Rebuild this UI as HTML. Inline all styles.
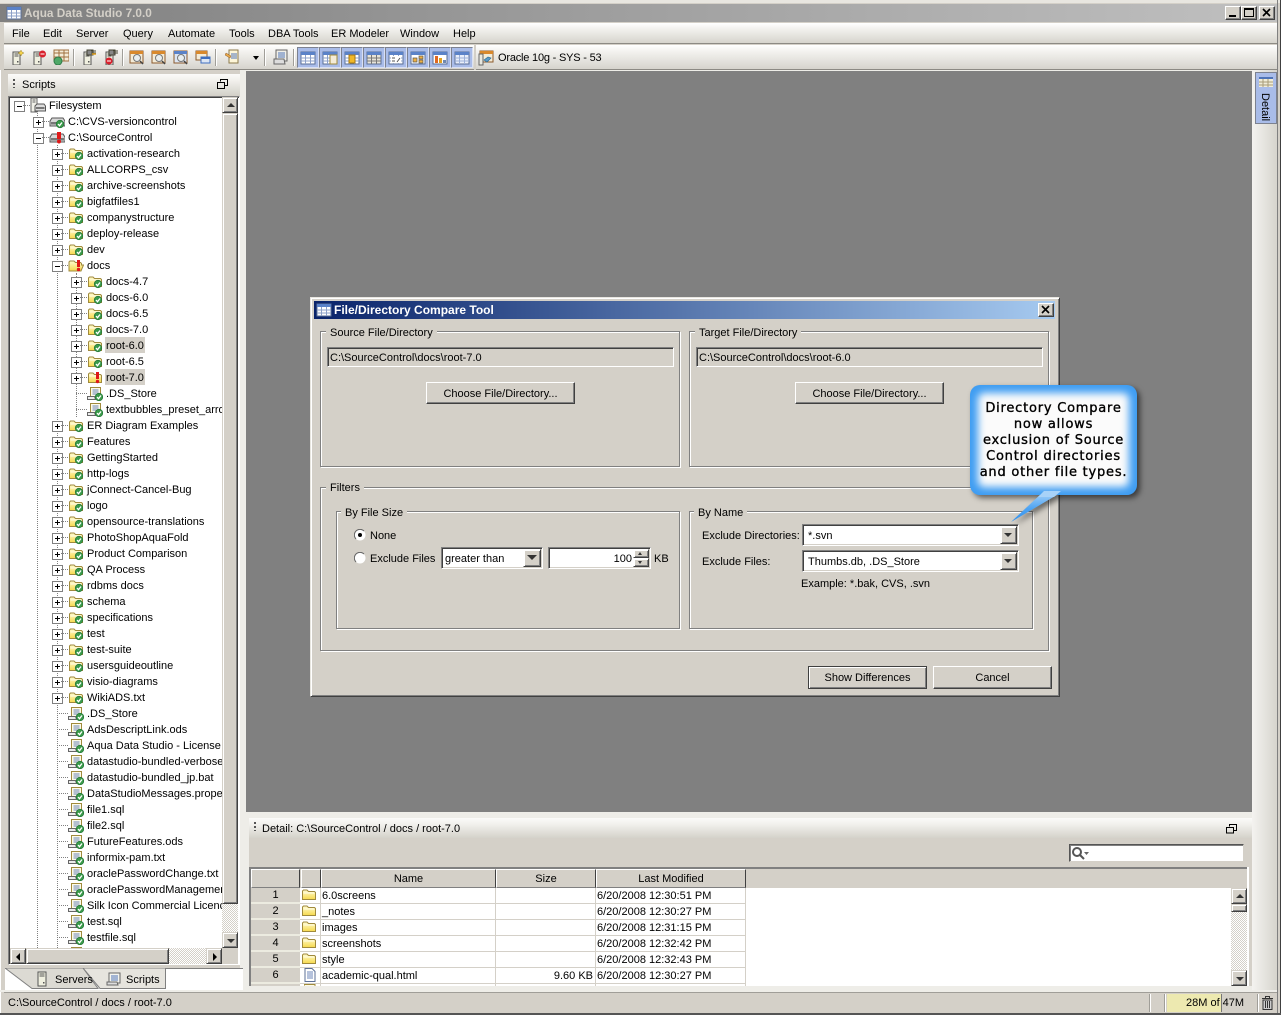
<!DOCTYPE html>
<html><head><meta charset="utf-8"><title>Aqua Data Studio 7.0.0</title>
<style>
html,body{margin:0;padding:0}
body{width:1281px;height:1015px;position:relative;overflow:hidden;background:#d4d0c8;font:11px/16px "Liberation Sans",sans-serif;color:#000}
div,span,svg{box-sizing:border-box}
.a,.t,.rw{position:absolute}
.t{white-space:nowrap;height:16px;line-height:18px}
.grad{background:linear-gradient(#fff,#f4f3f0 25%,#d6d4cd)}
.rw{height:16px;white-space:nowrap;line-height:16px}
.rw svg.ic{position:absolute;left:16px;top:0;width:16px;height:16px}
.rw span{position:absolute;left:35px;top:0;height:16px;line-height:18px;padding:0 1px;margin-left:-1px}
.rw span.h{background:#d4d0c8}
.rw b{position:absolute;left:0;top:4px;width:9px;height:9px;border:1px solid #808080;background:linear-gradient(#000,#000) center/5px 1px no-repeat,linear-gradient(#000,#000) center/1px 5px no-repeat,#fff}
.rw.m b{background:linear-gradient(#000,#000) center/5px 1px no-repeat,#fff}
.rw i{position:absolute;left:9px;top:8px;width:7px;border-top:1px dotted #808080}
.rw.n i{left:5px;width:11px}
.l0{left:14px}.l1{left:33px}.l2{left:52px}.l3{left:71px}
.vd{position:absolute;width:1px;border-left:1px dotted #808080}
.btn{position:absolute;background:#d4d0c8;border:1px solid;border-color:#fff #404040 #404040 #fff;box-shadow:inset -1px -1px 0 #808080;text-align:center}
.sb{position:absolute;background:#d4d0c8;border:1px solid;border-color:#d4d0c8 #404040 #404040 #d4d0c8;box-shadow:inset 1px 1px 0 #fff,inset -1px -1px 0 #808080}
.pat{position:absolute;background:repeating-conic-gradient(#d4d0c8 0 25%,#fff 0 50%) 0 0/2px 2px}
.up,.dn,.lf,.rt{position:absolute;width:0;height:0;border-style:solid;border-color:transparent}
.up{left:4px;top:5px;border-width:0 4px 4px;border-bottom-color:#333}
.dn{left:4px;top:6px;border-width:4px 4px 0;border-top-color:#333}
.lf{left:5px;top:4px;border-width:4px 4px 4px 0;border-right-color:#000}
.rt{left:6px;top:4px;border-width:4px 0 4px 4px;border-left-color:#000}
.grp{position:absolute;border:1px solid #808080;box-shadow:1px 1px 0 #fff,inset 1px 1px 0 #fff}
.lg{position:absolute;background:#d4d0c8;padding:0 4px;height:14px;line-height:16px;top:-7px;white-space:nowrap}
.fld{position:absolute;border:1px solid;border-color:#808080 #fff #fff #808080;box-shadow:inset 1px 1px 0 #404040,inset -1px -1px 0 #d4d0c8}
.tb{position:absolute;top:47px;width:22px;height:21px;background:#a9bce9;border:1px solid;border-color:#7d8290 #d9e0f4 #d9e0f4 #7d8290}
.tb svg{position:absolute;left:2px;top:2px}
.tsp{position:absolute;top:49px;width:2px;height:17px;border-left:1px solid #a09e98;border-right:1px solid #fff}
.hd{position:absolute;top:869px;height:19px;background:#d4d0c8;border:1px solid;border-color:#fff #404040 #808080 #fff;text-align:center;line-height:18px}
.cell{position:absolute;height:16px;line-height:17px;white-space:nowrap;border-bottom:1px solid #d4d0c8;border-right:1px solid #d4d0c8;background:#fff;overflow:hidden}
.rn{position:absolute;left:251px;width:49px;height:16px;line-height:15px;text-align:center;background:#d4d0c8;border-bottom:2px solid #ecebe0}
.tool{position:absolute;width:16px;height:16px;top:49px}
.fi{position:absolute;left:1px;top:-2px}
</style></head><body>
<svg width="0" height="0" style="position:absolute">
<defs>
<linearGradient id="yg" x1="0" y1="0" x2="0" y2="1"><stop offset="0" stop-color="#fffbd0"/><stop offset="1" stop-color="#f6d94c"/></linearGradient>
<symbol id="ck" viewBox="0 0 16 16"><circle cx="11" cy="11" r="3.800" fill="#3a9a4a" stroke="#1f6f33" stroke-width=".6"/><path d="M9 11l1.500 1.700 2.500-3.200" fill="none" stroke="#fff" stroke-width="1.300"/></symbol>
<symbol id="bg" viewBox="0 0 16 16"><path d="M9 3h3v7H9z" fill="#e01818"/><circle cx="10.500" cy="12.500" r="1.700" fill="#e01818"/></symbol>
<symbol id="f" viewBox="0 0 16 16"><path d="M1.500 13.500V5l1-1h3.500l1.500 1.500h6l1 1v7z" fill="url(#yg)" stroke="#a08a3c"/><path d="M2.500 7h11" stroke="#fffde8"/></symbol>
<symbol id="fc" viewBox="0 0 16 16"><use href="#f"/><use href="#ck"/></symbol>
<symbol id="fr" viewBox="0 0 16 16"><use href="#f"/><use href="#bg"/></symbol>
<symbol id="fo" viewBox="0 0 16 16"><path d="M1 14V5l1-1h4l1.500 1.500h5l1 1V8h2l-2.500 6z" fill="url(#yg)" stroke="#a08a3c"/><use href="#bg"/></symbol>
<symbol id="dc" viewBox="0 0 16 16"><path d="M1 8l2-3h11l2 3v5H1z" fill="#d8d8d8" stroke="#555"/><path d="M2 9h13v2.500H2z" fill="#777"/><use href="#ck"/></symbol>
<symbol id="dr" viewBox="0 0 16 16"><path d="M1 8l2-3h11l2 3v5H1z" fill="#d8d8d8" stroke="#555"/><path d="M2 9h13v2.500H2z" fill="#777"/><path d="M8 3h4v7H8z" fill="#e01818"/><circle cx="10" cy="12.500" r="2" fill="#e01818"/></symbol>
<symbol id="fs" viewBox="0 0 16 16"><path d="M1 1h6v14H1z" fill="#f0f0e8" stroke="#666"/><path d="M2.500 3h3M2.500 5h3" stroke="#666"/><path d="M5 9l2-2h7l1.500 2v5H5z" fill="#ddd" stroke="#555"/><path d="M6 10h8.500v2H6z" fill="#777"/></symbol>
<symbol id="fl" viewBox="0 0 16 16"><path d="M3.500 2.500h10v11h-10z" fill="#fdfbe8" stroke="#a08a3c"/><path d="M5.500 5h6M5.500 7h6M5.500 9h4" stroke="#6b84b8"/><path d="M.5 11.500h7l1 3h-8z" fill="#ececec" stroke="#666"/><use href="#ck" x="1" y="1"/></symbol>
<symbol id="doc" viewBox="0 0 16 16"><path d="M3 1.500h7l3 3v10H3z" fill="#fff" stroke="#5b6f96"/><path d="M5 5h6M5 7h6M5 9h6M5 11h6" stroke="#6b84b8"/></symbol>
<symbol id="grid" viewBox="0 0 16 16"><path d="M1 2h14v12H1z" fill="#f0ecd8" stroke="#8c7a4c"/><path d="M1 2h14v3H1z" fill="#3f6fc0"/><path d="M1 8h14M1 11h14M5.500 5v9M10.500 5v9" stroke="#a89c78"/></symbol>
<symbol id="srv" viewBox="0 0 16 16"><path d="M3 3h7v13H3z" fill="#f0f0e0" stroke="#555"/><path d="M4.500 5h4M4.500 7h4" stroke="#555"/><rect x="7" y="12" width="1.500" height="1.500" fill="#555"/></symbol>
<symbol id="qry" viewBox="0 0 16 16"><path d="M1 2h13v12H1z" fill="#f4ecd8" stroke="#8c5a2c"/><path d="M1 2h13v3H1z" fill="#d9892c"/><circle cx="8" cy="9" r="3.500" fill="#e8eef0" stroke="#777"/><path d="M11 12l3 3" stroke="#444" stroke-width="1.500"/></symbol>
<symbol id="btnic" viewBox="0 0 16 16"><path d="M1 2h14v12H1z" fill="#fff" stroke="#5b6f96"/><path d="M1 2h14v3H1z" fill="#5a82c8"/><path d="M1 8h14M1 11h14M5.500 5v9M10.500 5v9" stroke="#8ca0c8"/></symbol>
</defs></svg>

<!-- window frame -->
<div class="a" style="left:0;top:0;width:1281px;height:3px;background:#e8e6e0"></div>
<div class="a" style="left:0;top:4px;width:1278px;height:18px;background:linear-gradient(90deg,#808080,#c0c0c0)"></div>
<svg class="a" style="left:6px;top:5px" width="16" height="16"><use href="#btnic"/></svg>
<div class="t" style="left:24px;top:4px;color:#d4d0c8;font-weight:bold;font-size:11.800px">Aqua Data Studio 7.0.0</div>
<div class="btn" style="left:1225px;top:6px;width:16px;height:14px;"><div class="a" style="left:3px;top:8px;width:7px;height:2px;background:#000"></div></div>
<div class="btn" style="left:1241px;top:6px;width:16px;height:14px;"><div class="a" style="left:2px;top:1px;width:10px;height:9px;border:1px solid #000;border-top-width:2px"></div></div>
<div class="btn" style="left:1259px;top:6px;width:16px;height:14px;"><svg class="a" style="left:2px;top:1px" width="10" height="10"><path d="M1 1l7 7M8 1l-7 7" stroke="#000" stroke-width="1.600"/></svg></div>
<div class="a" style="left:1277px;top:0;width:1px;height:1015px;background:#808080"></div>
<div class="a" style="left:1280px;top:0;width:1px;height:1015px;background:#404040"></div>

<!-- menu -->
<div class="a grad" style="left:4px;top:23px;width:1273px;height:21px;border-bottom:1px solid #8c8a84"></div>
<div class="t" style="left:12px;top:25px">File</div>
<div class="t" style="left:43px;top:25px">Edit</div>
<div class="t" style="left:76px;top:25px">Server</div>
<div class="t" style="left:123px;top:25px">Query</div>
<div class="t" style="left:168px;top:25px">Automate</div>
<div class="t" style="left:229px;top:25px">Tools</div>
<div class="t" style="left:268px;top:25px">DBA Tools</div>
<div class="t" style="left:331px;top:25px">ER Modeler</div>
<div class="t" style="left:400px;top:25px">Window</div>
<div class="t" style="left:453px;top:25px">Help</div>

<!-- toolbar -->
<div class="a grad" style="left:4px;top:45px;width:1273px;height:25px;border-bottom:1px solid #8c8a84"></div>
<div class="a" style="left:474px;top:45px;width:2px;height:25px;background:#d4d0c8"></div>
<svg class="tool" style="left:10px"><use href="#srv"/><path d="M11 1l1 2 2 1-2 1-1 2-1-2-2-1 2-1z" fill="#f5d24a" stroke="#a08a3c" stroke-width=".5"/></svg>
<svg class="tool" style="left:31px"><use href="#srv"/><circle cx="11.500" cy="5" r="3.500" fill="#d8202c"/><path d="M9.500 5h4" stroke="#fff"/></svg>
<svg class="tool" style="left:53px"><path d="M1 1h15v11H1z" fill="#f4ecd8" stroke="#a07040"/><path d="M1 4h15M1 8h15M6 1v11M11 1v11" stroke="#a07040"/><circle cx="5" cy="12" r="4" fill="#4fa868" stroke="#2f7a48"/></svg>
<div class="tsp" style="left:73px"></div>
<svg class="tool" style="left:81px"><use href="#srv"/><path d="M6 1l6 0v5h-6zM10 2h5M10 4h5" fill="#888" stroke="#443"/><path d="M11 5h4" stroke="#e0a020" stroke-width="1.500"/></svg>
<svg class="tool" style="left:103px"><use href="#srv"/><path d="M6 1l6 0v5h-6zM10 2h5M10 4h5" fill="#888" stroke="#443"/><circle cx="6" cy="12" r="3.500" fill="#d8202c"/><path d="M4 12h4" stroke="#fff"/></svg>
<div class="tsp" style="left:122px"></div>
<svg class="tool" style="left:129px"><use href="#qry"/></svg>
<svg class="tool" style="left:151px"><use href="#qry"/></svg>
<svg class="tool" style="left:173px"><path d="M1 2h13v12H1z" fill="#dce6f4" stroke="#8c5a2c"/><path d="M1 2h13v3H1z" fill="#5a82c8"/><circle cx="8" cy="9" r="3.500" fill="#e8eef0" stroke="#777"/><path d="M11 12l3 3" stroke="#444" stroke-width="1.500"/></svg>
<svg class="tool" style="left:195px"><path d="M1 2h11v9H1z" fill="#f4ecd8" stroke="#8c5a2c"/><path d="M1 2h11v3H1z" fill="#d9892c"/><path d="M6 8h9v6H6z" fill="#dce6f4" stroke="#3f6fc0"/><path d="M6 8h9v2H6z" fill="#3f6fc0"/></svg>
<div class="tsp" style="left:215px"></div>
<svg class="tool" style="left:225px"><path d="M4 1h9v13H4z" fill="#fdf6d8" stroke="#8c7a4c"/><path d="M6 5h6M6 7h6M6 9h6" stroke="#4f74b8"/><path d="M1 4l5 3-1 2-5-3z" fill="#e8a848" stroke="#8c5a2c" stroke-width=".5"/></svg>
<div class="a" style="left:253px;top:56px;border-style:solid;border-width:4px 3.500px 0;border-color:#000 transparent transparent;width:0;height:0"></div>
<div class="tsp" style="left:264px"></div>
<svg class="tool" style="left:273px"><path d="M3 1h11v11H3z" fill="#f0efe8" stroke="#666"/><path d="M5 4h7M5 6h7M5 8h7" stroke="#4f74b8"/><path d="M1 10h10l1 5H1z" fill="#ddd" stroke="#666"/></svg>
<div class="tsp" style="left:293px"></div>
<div class="tb" style="left:297px"><svg width="16" height="16"><use href="#btnic"/></svg></div>
<div class="tb" style="left:319px"><svg width="16" height="16"><use href="#btnic"/><path d="M8 5h7v9H8z" fill="#f4ecd8" stroke="#a08a3c"/></svg></div>
<div class="tb" style="left:341px"><svg width="16" height="16"><use href="#btnic"/><path d="M5 5h6v8H5z" fill="#f0b828" stroke="#a87810"/></svg></div>
<div class="tb" style="left:363px"><svg width="16" height="16"><path d="M1 2h14v12H1z" fill="#e8e4d8" stroke="#5b6f96"/><path d="M1 2h14v3H1z" fill="#5a82c8"/><path d="M1 8h14M1 11h14M5.500 5v9M10.500 5v9" stroke="#777"/></svg></div>
<div class="tb" style="left:385px"><svg width="16" height="16"><use href="#btnic"/><path d="M3 6h10v7H3z" fill="#fff"/><path d="M4 8h3M4 11h3M9 12l3-4" stroke="#555"/></svg></div>
<div class="tb" style="left:407px"><svg width="16" height="16"><path d="M1 2h14v12H1z" fill="#fff" stroke="#5b6f96"/><path d="M1 2h14v3H1z" fill="#5a82c8"/><path d="M3 8h4v4H3zM9 6h4v3H9zM9 10h4v3H9z" fill="#f0b040" stroke="#555" stroke-width=".7"/></svg></div>
<div class="tb" style="left:429px"><svg width="16" height="16"><path d="M1 2h14v12H1z" fill="#fff" stroke="#5b6f96"/><path d="M1 2h14v3H1z" fill="#5a82c8"/><path d="M3 6h3v7H3z" fill="#e06820"/><path d="M7 8h3v5H7z" fill="#e0a020"/><path d="M11 10h3v3h-3z" fill="#7088b0"/></svg></div>
<div class="tb" style="left:451px"><svg width="16" height="16"><path d="M1 2h14v12H1z" fill="#e8eefa" stroke="#5b6f96"/><path d="M1 2h14v3H1z" fill="#5a82c8"/><path d="M1 8h14M1 11h14M5.500 5v9M10.500 5v9" stroke="#9cb0d8"/></svg></div>
<svg class="tool" style="left:478px;top:50px"><path d="M2 1h13v11H2z" fill="#f4ecd8" stroke="#8c5a2c"/><path d="M2 1h13v3H2z" fill="#d9892c"/><path d="M1 4h4v11H1z" fill="#e8e8e0" stroke="#666"/><path d="M6 10l4-3 3 1-4 4z" fill="#5a9ac8" stroke="#2f6f98" stroke-width=".7"/></svg>
<div class="t" style="left:498px;top:49px;letter-spacing:-.2px">Oracle 10g - SYS - 53</div>

<!-- main gray area -->
<div class="a" style="left:240px;top:70px;width:1037px;height:922px;background:#eeede8"></div>
<div class="a" style="left:246px;top:71px;width:1006px;height:741px;background:#808080"></div>

<!-- right strip -->
<div class="a" style="left:1252px;top:70px;width:25px;height:922px;background:linear-gradient(90deg,#f4f3f0,#d6d4cd)"></div>
<div class="a" style="left:1255px;top:72px;width:22px;height:52px;background:#a9bce9;border:1px solid #7d8290"></div>
<svg class="a" style="left:1259px;top:77px" width="14" height="11"><path d="M0 0h14v10H0z" fill="#f0ecd8"/><path d="M0 0h14v2H0z" fill="#4f74b8"/><path d="M0 5h14M0 8h14M4 2v8M9 2v8" stroke="#a89c78"/></svg>
<div class="a" style="left:1257px;top:93px;width:16px;height:28px;writing-mode:vertical-rl;line-height:16px;white-space:nowrap">Detail</div>

<!-- left panel -->
<div class="a" style="left:0;top:70px;width:240px;height:922px;background:#d4d0c8"></div>
<div class="a" style="left:0;top:70px;width:4px;height:945px;background:#d4d0c8;border-left:1px solid #fff"></div>
<div class="a" style="left:8px;top:74px;width:232px;height:21px;background:linear-gradient(#fbfbf9,#f2f1ed 30%,#d4d2ca)"></div>
<div class="a" style="left:13px;top:79px;width:2px;height:9px;background:repeating-linear-gradient(#555 0 2px,transparent 2px 4px)"></div>
<div class="t" style="left:22px;top:76px">Scripts</div>
<svg class="a" style="left:217px;top:79px" width="11" height="11"><path d="M3.500 2.500V.5h7v6H8" fill="none" stroke="#000"/><path d="M.5 3.500h7v6h-7z" fill="none" stroke="#000" stroke-width="1"/></svg>

<div class="a" style="left:8px;top:96px;width:232px;height:869px;background:#fff;border:1px solid #808080;border-right-color:#fff;border-bottom-color:#fff;box-shadow:inset 1px 1px 0 #404040"></div>
<div class="a" id="tree" style="left:0;top:0;width:222px;height:948px;overflow:hidden">
<div class="vd" style="left:37px;top:111px;height:837px"></div>
<div class="vd" style="left:57px;top:145px;height:803px"></div>
<div class="vd" style="left:76px;top:273px;height:144px"></div>
<div class="rw l0 m" style="top:97px"><b></b><i></i><svg class="ic"><use href="#fs"/></svg><span>Filesystem</span></div>
<div class="rw l1" style="top:113px"><b></b><i></i><svg class="ic"><use href="#dc"/></svg><span>C:\CVS-versioncontrol</span></div>
<div class="rw l1 m" style="top:129px"><b></b><i></i><svg class="ic"><use href="#dr"/></svg><span>C:\SourceControl</span></div>
<div class="rw l2" style="top:145px"><b></b><i></i><svg class="ic"><use href="#fc"/></svg><span>activation-research</span></div>
<div class="rw l2" style="top:161px"><b></b><i></i><svg class="ic"><use href="#fc"/></svg><span>ALLCORPS_csv</span></div>
<div class="rw l2" style="top:177px"><b></b><i></i><svg class="ic"><use href="#fc"/></svg><span>archive-screenshots</span></div>
<div class="rw l2" style="top:193px"><b></b><i></i><svg class="ic"><use href="#fc"/></svg><span>bigfatfiles1</span></div>
<div class="rw l2" style="top:209px"><b></b><i></i><svg class="ic"><use href="#fc"/></svg><span>companystructure</span></div>
<div class="rw l2" style="top:225px"><b></b><i></i><svg class="ic"><use href="#fc"/></svg><span>deploy-release</span></div>
<div class="rw l2" style="top:241px"><b></b><i></i><svg class="ic"><use href="#fc"/></svg><span>dev</span></div>
<div class="rw l2 m" style="top:257px"><b></b><i></i><svg class="ic"><use href="#fo"/></svg><span>docs</span></div>
<div class="rw l3" style="top:273px"><b></b><i></i><svg class="ic"><use href="#fc"/></svg><span>docs-4.7</span></div>
<div class="rw l3" style="top:289px"><b></b><i></i><svg class="ic"><use href="#fc"/></svg><span>docs-6.0</span></div>
<div class="rw l3" style="top:305px"><b></b><i></i><svg class="ic"><use href="#fc"/></svg><span>docs-6.5</span></div>
<div class="rw l3" style="top:321px"><b></b><i></i><svg class="ic"><use href="#fc"/></svg><span>docs-7.0</span></div>
<div class="rw l3" style="top:337px"><b></b><i></i><svg class="ic"><use href="#fc"/></svg><span class="h">root-6.0</span></div>
<div class="rw l3" style="top:353px"><b></b><i></i><svg class="ic"><use href="#fc"/></svg><span>root-6.5</span></div>
<div class="rw l3" style="top:369px"><b></b><i></i><svg class="ic"><use href="#fr"/></svg><span class="h">root-7.0</span></div>
<div class="rw l3 n" style="top:385px"><i></i><svg class="ic"><use href="#fl"/></svg><span>.DS_Store</span></div>
<div class="rw l3 n" style="top:401px"><i></i><svg class="ic"><use href="#fl"/></svg><span>textbubbles_preset_arrows</span></div>
<div class="rw l2" style="top:417px"><b></b><i></i><svg class="ic"><use href="#fc"/></svg><span>ER Diagram Examples</span></div>
<div class="rw l2" style="top:433px"><b></b><i></i><svg class="ic"><use href="#fc"/></svg><span>Features</span></div>
<div class="rw l2" style="top:449px"><b></b><i></i><svg class="ic"><use href="#fc"/></svg><span>GettingStarted</span></div>
<div class="rw l2" style="top:465px"><b></b><i></i><svg class="ic"><use href="#fc"/></svg><span>http-logs</span></div>
<div class="rw l2" style="top:481px"><b></b><i></i><svg class="ic"><use href="#fc"/></svg><span>jConnect-Cancel-Bug</span></div>
<div class="rw l2" style="top:497px"><b></b><i></i><svg class="ic"><use href="#fc"/></svg><span>logo</span></div>
<div class="rw l2" style="top:513px"><b></b><i></i><svg class="ic"><use href="#fc"/></svg><span>opensource-translations</span></div>
<div class="rw l2" style="top:529px"><b></b><i></i><svg class="ic"><use href="#fc"/></svg><span>PhotoShopAquaFold</span></div>
<div class="rw l2" style="top:545px"><b></b><i></i><svg class="ic"><use href="#fc"/></svg><span>Product Comparison</span></div>
<div class="rw l2" style="top:561px"><b></b><i></i><svg class="ic"><use href="#fc"/></svg><span>QA Process</span></div>
<div class="rw l2" style="top:577px"><b></b><i></i><svg class="ic"><use href="#fc"/></svg><span>rdbms docs</span></div>
<div class="rw l2" style="top:593px"><b></b><i></i><svg class="ic"><use href="#fc"/></svg><span>schema</span></div>
<div class="rw l2" style="top:609px"><b></b><i></i><svg class="ic"><use href="#fc"/></svg><span>specifications</span></div>
<div class="rw l2" style="top:625px"><b></b><i></i><svg class="ic"><use href="#fc"/></svg><span>test</span></div>
<div class="rw l2" style="top:641px"><b></b><i></i><svg class="ic"><use href="#fc"/></svg><span>test-suite</span></div>
<div class="rw l2" style="top:657px"><b></b><i></i><svg class="ic"><use href="#fc"/></svg><span>usersguideoutline</span></div>
<div class="rw l2" style="top:673px"><b></b><i></i><svg class="ic"><use href="#fc"/></svg><span>visio-diagrams</span></div>
<div class="rw l2" style="top:689px"><b></b><i></i><svg class="ic"><use href="#fc"/></svg><span>WikiADS.txt</span></div>
<div class="rw l2 n" style="top:705px"><i></i><svg class="ic"><use href="#fl"/></svg><span>.DS_Store</span></div>
<div class="rw l2 n" style="top:721px"><i></i><svg class="ic"><use href="#fl"/></svg><span>AdsDescriptLink.ods</span></div>
<div class="rw l2 n" style="top:737px"><i></i><svg class="ic"><use href="#fl"/></svg><span>Aqua Data Studio - License key</span></div>
<div class="rw l2 n" style="top:753px"><i></i><svg class="ic"><use href="#fl"/></svg><span>datastudio-bundled-verbose.bat</span></div>
<div class="rw l2 n" style="top:769px"><i></i><svg class="ic"><use href="#fl"/></svg><span>datastudio-bundled_jp.bat</span></div>
<div class="rw l2 n" style="top:785px"><i></i><svg class="ic"><use href="#fl"/></svg><span>DataStudioMessages.properties</span></div>
<div class="rw l2 n" style="top:801px"><i></i><svg class="ic"><use href="#fl"/></svg><span>file1.sql</span></div>
<div class="rw l2 n" style="top:817px"><i></i><svg class="ic"><use href="#fl"/></svg><span>file2.sql</span></div>
<div class="rw l2 n" style="top:833px"><i></i><svg class="ic"><use href="#fl"/></svg><span>FutureFeatures.ods</span></div>
<div class="rw l2 n" style="top:849px"><i></i><svg class="ic"><use href="#fl"/></svg><span>informix-pam.txt</span></div>
<div class="rw l2 n" style="top:865px"><i></i><svg class="ic"><use href="#fl"/></svg><span>oraclePasswordChange.txt</span></div>
<div class="rw l2 n" style="top:881px"><i></i><svg class="ic"><use href="#fl"/></svg><span>oraclePasswordManagement.txt</span></div>
<div class="rw l2 n" style="top:897px"><i></i><svg class="ic"><use href="#fl"/></svg><span>Silk Icon Commercial Licence.txt</span></div>
<div class="rw l2 n" style="top:913px"><i></i><svg class="ic"><use href="#fl"/></svg><span>test.sql</span></div>
<div class="rw l2 n" style="top:929px"><i></i><svg class="ic"><use href="#fl"/></svg><span>testfile.sql</span></div>
<div class="rw l2 n" style="top:945px"><i></i><svg class="ic"><use href="#fl"/></svg></div>
</div>
<!-- tree scrollbars -->
<div class="pat" style="left:222px;top:97px;width:16px;height:851px"></div>
<div class="sb" style="left:222px;top:97px;width:16px;height:16px"><div class="up"></div></div>
<div class="sb" style="left:222px;top:113px;width:16px;height:791px"></div>
<div class="sb" style="left:222px;top:932px;width:16px;height:16px"><div class="dn"></div></div>
<div class="pat" style="left:10px;top:948px;width:212px;height:16px"></div>
<div class="sb" style="left:10px;top:948px;width:16px;height:16px"><div class="lf"></div></div>
<div class="sb" style="left:26px;top:948px;width:143px;height:16px"></div>
<div class="sb" style="left:206px;top:948px;width:16px;height:16px"><div class="rt"></div></div>
<div class="a" style="left:222px;top:948px;width:16px;height:16px;background:#d4d0c8"></div>

<!-- tabs -->
<div class="a" style="left:5px;top:968px;width:238px;height:22px;background:#fff;border-top:1px solid #808080"></div>
<svg class="a" style="left:5px;top:968px" width="170" height="22"><path d="M0 0L27 20.500H93L78 0z" fill="#dcdad3" stroke="#808080"/><path d="M78 0L95 20.500 160.500 20.500V0z" fill="#e6e4de" stroke="#808080"/></svg>
<svg class="a" style="left:36px;top:971px" width="14" height="16"><path d="M2 1h8v14H2z" fill="#f0f0e0" stroke="#555"/><path d="M3.500 3h5M3.500 5h5" stroke="#555"/><rect x="7" y="11" width="1.500" height="1.500" fill="#555"/></svg>
<div class="t" style="left:55px;top:971px">Servers</div>
<svg class="a" style="left:106px;top:971px" width="16" height="16"><path d="M3 2h11v10H3z" fill="#f4f4ee" stroke="#666"/><path d="M5 5h7M5 7h7M5 9h7" stroke="#4f74b8"/><path d="M1 11h10l1 3H1z" fill="#ddd" stroke="#666"/></svg>
<div class="t" style="left:126px;top:971px">Scripts</div>

<!-- detail panel -->
<div class="a" style="left:249px;top:818px;width:1003px;height:20px;background:linear-gradient(#fbfbf9,#f2f1ed 30%,#d4d2ca)"></div>
<div class="a" style="left:254px;top:822px;width:2px;height:9px;background:repeating-linear-gradient(#555 0 2px,transparent 2px 4px)"></div>
<div class="t" style="left:262px;top:820px">Detail: C:\SourceControl / docs / root-7.0</div>
<svg class="a" style="left:1226px;top:824px" width="11" height="10"><path d="M3.500 2.500V.5h7v6H8" fill="none" stroke="#000"/><path d="M.5 3.500h7v5.500h-7z" fill="none" stroke="#000"/></svg>
<div class="a" style="left:249px;top:838px;width:1003px;height:150px;background:#d4d0c8"></div>
<div class="a" style="left:1069px;top:844px;width:175px;height:18px;background:#fff;border:1px solid;border-color:#555 #d4d0c8 #d4d0c8 #555;box-shadow:inset 1px 1px 0 #808080"></div>
<svg class="a" style="left:1071px;top:846px" width="20" height="14"><circle cx="6" cy="6" r="4" fill="none" stroke="#555" stroke-width="2"/><path d="M9 9l4 4" stroke="#555" stroke-width="2"/><path d="M13 6h5l-2.500 3z" fill="#666"/></svg>

<div class="a" style="left:249px;top:867px;width:1000px;height:2px;background:#808080"></div>
<div class="a" style="left:1247px;top:867px;width:2px;height:121px;background:#fff"></div>
<div class="a" style="left:249px;top:867px;width:2px;height:120px;background:#808080"></div>
<div class="a" style="left:251px;top:888px;width:996px;height:98px;background:#fff"></div>
<div class="hd" style="left:251px;width:49px"></div>
<div class="hd" style="left:301px;width:20px"></div>
<div class="hd" style="left:321px;width:175px">Name</div>
<div class="hd" style="left:496px;width:100px">Size</div>
<div class="hd" style="left:596px;width:150px">Last Modified</div>
<div class="a" style="left:746px;top:869px;width:501px;height:19px;background:#d4d0c8"></div>

<div class="rn" style="top:888px">1</div>
<div class="rn" style="top:904px">2</div>
<div class="rn" style="top:920px">3</div>
<div class="rn" style="top:936px">4</div>
<div class="rn" style="top:952px">5</div>
<div class="rn" style="top:968px">6</div>
<div class="a" style="left:251px;top:984px;width:49px;height:2px;background:#d4d0c8"></div>

<div class="cell" style="left:300px;top:888px;width:21px"><svg class="fi" width="16" height="16"><use href="#f"/></svg></div>
<div class="cell" style="left:321px;top:888px;width:175px;padding-left:1px">6.0screens</div>
<div class="cell" style="left:496px;top:888px;width:100px"></div>
<div class="cell" style="left:596px;top:888px;width:150px;padding-left:1px">6/20/2008 12:30:51 PM</div>
<div class="cell" style="left:300px;top:904px;width:21px"><svg class="fi" width="16" height="16"><use href="#f"/></svg></div>
<div class="cell" style="left:321px;top:904px;width:175px;padding-left:1px">_notes</div>
<div class="cell" style="left:496px;top:904px;width:100px"></div>
<div class="cell" style="left:596px;top:904px;width:150px;padding-left:1px">6/20/2008 12:30:27 PM</div>
<div class="cell" style="left:300px;top:920px;width:21px"><svg class="fi" width="16" height="16"><use href="#f"/></svg></div>
<div class="cell" style="left:321px;top:920px;width:175px;padding-left:1px">images</div>
<div class="cell" style="left:496px;top:920px;width:100px"></div>
<div class="cell" style="left:596px;top:920px;width:150px;padding-left:1px">6/20/2008 12:31:15 PM</div>
<div class="cell" style="left:300px;top:936px;width:21px"><svg class="fi" width="16" height="16"><use href="#f"/></svg></div>
<div class="cell" style="left:321px;top:936px;width:175px;padding-left:1px">screenshots</div>
<div class="cell" style="left:496px;top:936px;width:100px"></div>
<div class="cell" style="left:596px;top:936px;width:150px;padding-left:1px">6/20/2008 12:32:42 PM</div>
<div class="cell" style="left:300px;top:952px;width:21px"><svg class="fi" width="16" height="16"><use href="#f"/></svg></div>
<div class="cell" style="left:321px;top:952px;width:175px;padding-left:1px">style</div>
<div class="cell" style="left:496px;top:952px;width:100px"></div>
<div class="cell" style="left:596px;top:952px;width:150px;padding-left:1px">6/20/2008 12:32:43 PM</div>
<div class="cell" style="left:300px;top:968px;width:21px"><svg class="fi" style="top:-1px;left:2px" width="16" height="16"><use href="#doc"/></svg></div>
<div class="cell" style="left:321px;top:968px;width:175px;padding-left:1px">academic-qual.html</div>
<div class="cell" style="left:496px;top:968px;width:100px;text-align:right;padding-right:2px">9.60 KB</div>
<div class="cell" style="left:596px;top:968px;width:150px;padding-left:1px">6/20/2008 12:30:27 PM</div>
<div class="a" style="left:301px;top:984px;width:445px;height:2px;background:#fff"></div>
<svg class="a" style="left:304px;top:984px" width="12" height="2"><path d="M0 2V.5h11V2" fill="#fdfbe8" stroke="#a08a3c"/></svg>
<div class="a" style="left:320px;top:984px;width:1px;height:2px;background:#d4d0c8"></div>
<div class="a" style="left:495px;top:984px;width:1px;height:2px;background:#d4d0c8"></div>
<div class="a" style="left:595px;top:984px;width:1px;height:2px;background:#d4d0c8"></div>
<div class="a" style="left:745px;top:984px;width:1px;height:2px;background:#d4d0c8"></div>

<div class="pat" style="left:1231px;top:888px;width:16px;height:98px"></div>
<div class="sb" style="left:1231px;top:888px;width:16px;height:16px"><div class="up"></div></div>
<div class="sb" style="left:1231px;top:904px;width:16px;height:8px"></div>
<div class="sb" style="left:1231px;top:970px;width:16px;height:16px"><div class="dn"></div></div>
<div class="a" style="left:249px;top:986px;width:1003px;height:3px;background:#eeede8"></div>

<!-- status -->
<div class="a" style="left:0;top:990px;width:1277px;height:2px;background:#eeede8"></div>
<div class="a" style="left:4px;top:992px;width:1273px;height:21px;background:#d4d0c8;border-top:1px solid #a09e98"></div>
<div class="t" style="left:8px;top:994px">C:\SourceControl / docs / root-7.0</div>
<div class="a" style="left:1149px;top:994px;width:2px;height:18px;border-left:1px solid #a09e98;border-right:1px solid #fff"></div>
<div class="a" style="left:1164px;top:994px;width:2px;height:18px;border-left:1px solid #a09e98;border-right:1px solid #fff"></div>
<div class="a" style="left:1167px;top:994px;width:55px;height:18px;background:#ede9b0;border-right:1px solid #777"></div>
<div class="t" style="left:1186px;top:994px">28M of 47M</div>
<div class="a" style="left:1257px;top:994px;width:2px;height:18px;border-left:1px solid #a09e98;border-right:1px solid #fff"></div>
<svg class="a" style="left:1261px;top:996px" width="13" height="14"><path d="M1 2.500h11M4.500 2V.5h4V2" fill="none" stroke="#333"/><path d="M2 4h9v9.500H2z" fill="#ccc" stroke="#333"/><path d="M4.500 5v7M6.500 5v7M8.500 5v7" stroke="#333"/></svg>
<div class="a" style="left:0;top:1013px;width:1281px;height:2px;background:#555"></div>

<!-- dialog -->
<div class="a" style="left:310px;top:297px;width:750px;height:400px;background:#d4d0c8;border:1px solid;border-color:#e8e6e0 #404040 #404040 #e8e6e0;box-shadow:inset 1px 1px 0 #fff,inset -1px -1px 0 #808080"></div>
<div class="a" style="left:314px;top:301px;width:741px;height:18px;background:linear-gradient(90deg,#0a246a,#a6caf0)"></div>
<svg class="a" style="left:316px;top:302px" width="16" height="16"><use href="#btnic"/></svg>
<div class="t" style="left:334px;top:301px;color:#fff;font-weight:bold;font-size:12px">File/Directory Compare Tool</div>
<div class="btn" style="left:1038px;top:303px;width:16px;height:14px"><svg class="a" style="left:2px;top:1px" width="10" height="10"><path d="M1 1l7 7M8 1l-7 7" stroke="#000" stroke-width="1.600"/></svg></div>

<div class="grp" style="left:320px;top:331px;width:360px;height:136px"><div class="lg" style="left:5px;top:-7px">Source File/Directory</div></div>
<div class="fld" style="left:327px;top:347px;width:347px;height:20px"></div>
<div class="t" style="left:330px;top:349px">C:\SourceControl\docs\root-7.0</div>
<div class="btn" style="left:426px;top:382px;width:149px;height:22px;line-height:22px">Choose File/Directory...</div>

<div class="grp" style="left:689px;top:331px;width:360px;height:136px"><div class="lg" style="left:5px">Target File/Directory</div></div>
<div class="fld" style="left:696px;top:347px;width:347px;height:20px"></div>
<div class="t" style="left:699px;top:349px">C:\SourceControl\docs\root-6.0</div>
<div class="btn" style="left:795px;top:382px;width:149px;height:22px;line-height:22px">Choose File/Directory...</div>

<div class="grp" style="left:320px;top:487px;width:729px;height:164px"><div class="lg" style="left:5px;line-height:14px">Filters</div></div>
<div class="grp" style="left:336px;top:511px;width:344px;height:118px"><div class="lg" style="left:4px">By File Size</div></div>
<div class="grp" style="left:689px;top:511px;width:344px;height:118px"><div class="lg" style="left:4px">By Name</div></div>

<svg class="a" style="left:354px;top:529px" width="12" height="12"><circle cx="6" cy="6" r="5.500" fill="#fff"/><path d="M10 2A5.500 5.500 0 0 0 2 10" fill="none" stroke="#666"/><circle cx="6" cy="6" r="2" fill="#000"/></svg>
<div class="t" style="left:370px;top:527px">None</div>
<svg class="a" style="left:354px;top:552px" width="12" height="12"><circle cx="6" cy="6" r="5.500" fill="#fff"/><path d="M10 2A5.500 5.500 0 0 0 2 10" fill="none" stroke="#666"/></svg>
<div class="t" style="left:370px;top:550px">Exclude Files</div>

<div class="fld" style="left:441px;top:547px;width:102px;height:22px;background:#fff"></div>
<div class="t" style="left:445px;top:550px">greater than</div>
<div class="sb" style="left:523px;top:549px;width:18px;height:18px;border-color:#fff #404040 #404040 #fff"><div class="dn" style="left:3px;top:5px;border-width:5px 5px 0"></div></div>
<div class="fld" style="left:548px;top:547px;width:103px;height:22px;background:#fff"></div>
<div class="t" style="left:592px;top:550px;width:40px;text-align:right">100</div>
<div class="sb" style="left:633px;top:549px;width:16px;height:9px;border-color:#fff #404040 #404040 #fff"><div class="a" style="left:4px;top:2px;border-style:solid;border-width:0 2.500px 3px;border-color:transparent transparent #333"></div></div>
<div class="sb" style="left:633px;top:558px;width:16px;height:9px;border-color:#fff #404040 #404040 #fff"><div class="a" style="left:4px;top:2px;border-style:solid;border-width:3px 2.500px 0;border-color:#333 transparent transparent"></div></div>
<div class="t" style="left:654px;top:550px">KB</div>

<div class="t" style="left:702px;top:527px">Exclude Directories:</div>
<div class="fld" style="left:802px;top:524px;width:217px;height:22px;background:#fff"></div>
<div class="t" style="left:808px;top:527px">*.svn</div>
<div class="sb" style="left:1000px;top:526px;width:17px;height:18px;border-color:#fff #404040 #404040 #fff"><div class="dn" style="left:3px;top:6px;border-width:4px 4px 0"></div></div>
<div class="t" style="left:702px;top:553px">Exclude Files:</div>
<div class="fld" style="left:802px;top:550px;width:217px;height:22px;background:#fff"></div>
<div class="t" style="left:808px;top:553px">Thumbs.db, .DS_Store</div>
<div class="sb" style="left:1000px;top:552px;width:17px;height:18px;border-color:#fff #404040 #404040 #fff"><div class="dn" style="left:3px;top:6px;border-width:4px 4px 0"></div></div>
<div class="t" style="left:801px;top:575px">Example: *.bak, CVS, .svn</div>

<div class="btn" style="left:808px;top:666px;width:119px;height:23px;line-height:23px;border-color:#404040;box-shadow:inset 1px 1px 0 #fff,inset -1px -1px 0 #808080">Show Differences</div>
<div class="btn" style="left:933px;top:666px;width:119px;height:23px;line-height:23px">Cancel</div>

<!-- balloon -->
<svg class="a" style="left:960px;top:378px;filter:drop-shadow(3px 3px 3px rgba(0,0,0,.55))" width="190" height="150" viewBox="960 378 190 150">
<defs>
<linearGradient id="tl" x1="0" y1="0" x2="0" y2="1"><stop offset="0" stop-color="#a8d2f8"/><stop offset=".55" stop-color="#4ea4f2"/><stop offset="1" stop-color="#2f8fee"/></linearGradient>
<clipPath id="cb"><rect x="970" y="385" width="167" height="110" rx="10"/></clipPath>
<filter id="bl" x="-20%" y="-20%" width="140%" height="140%"><feGaussianBlur stdDeviation="4"/></filter>
</defs>
<path d="M1043 492L1011 522 1062 492z" fill="url(#tl)"/>
<rect x="970" y="385" width="167" height="110" rx="10" fill="#3f9df2"/>
<g clip-path="url(#cb)"><rect x="978" y="393" width="151" height="94" rx="6" fill="#fbfbfb" filter="url(#bl)"/></g>
<path d="M1044 491L1038 497 1054 497 1061 491z" fill="#a8d2f8"/>
</svg>
<div class="a" style="left:970px;top:400px;width:167px;text-align:center;font:13px/16px 'DejaVu Sans',sans-serif;color:#000;letter-spacing:.78px;-webkit-text-stroke:.35px #000;padding-top:1px;height:90px">Directory Compare<br>now allows<br>exclusion of Source<br>Control directories<br>and other file types.</div>
</body></html>
